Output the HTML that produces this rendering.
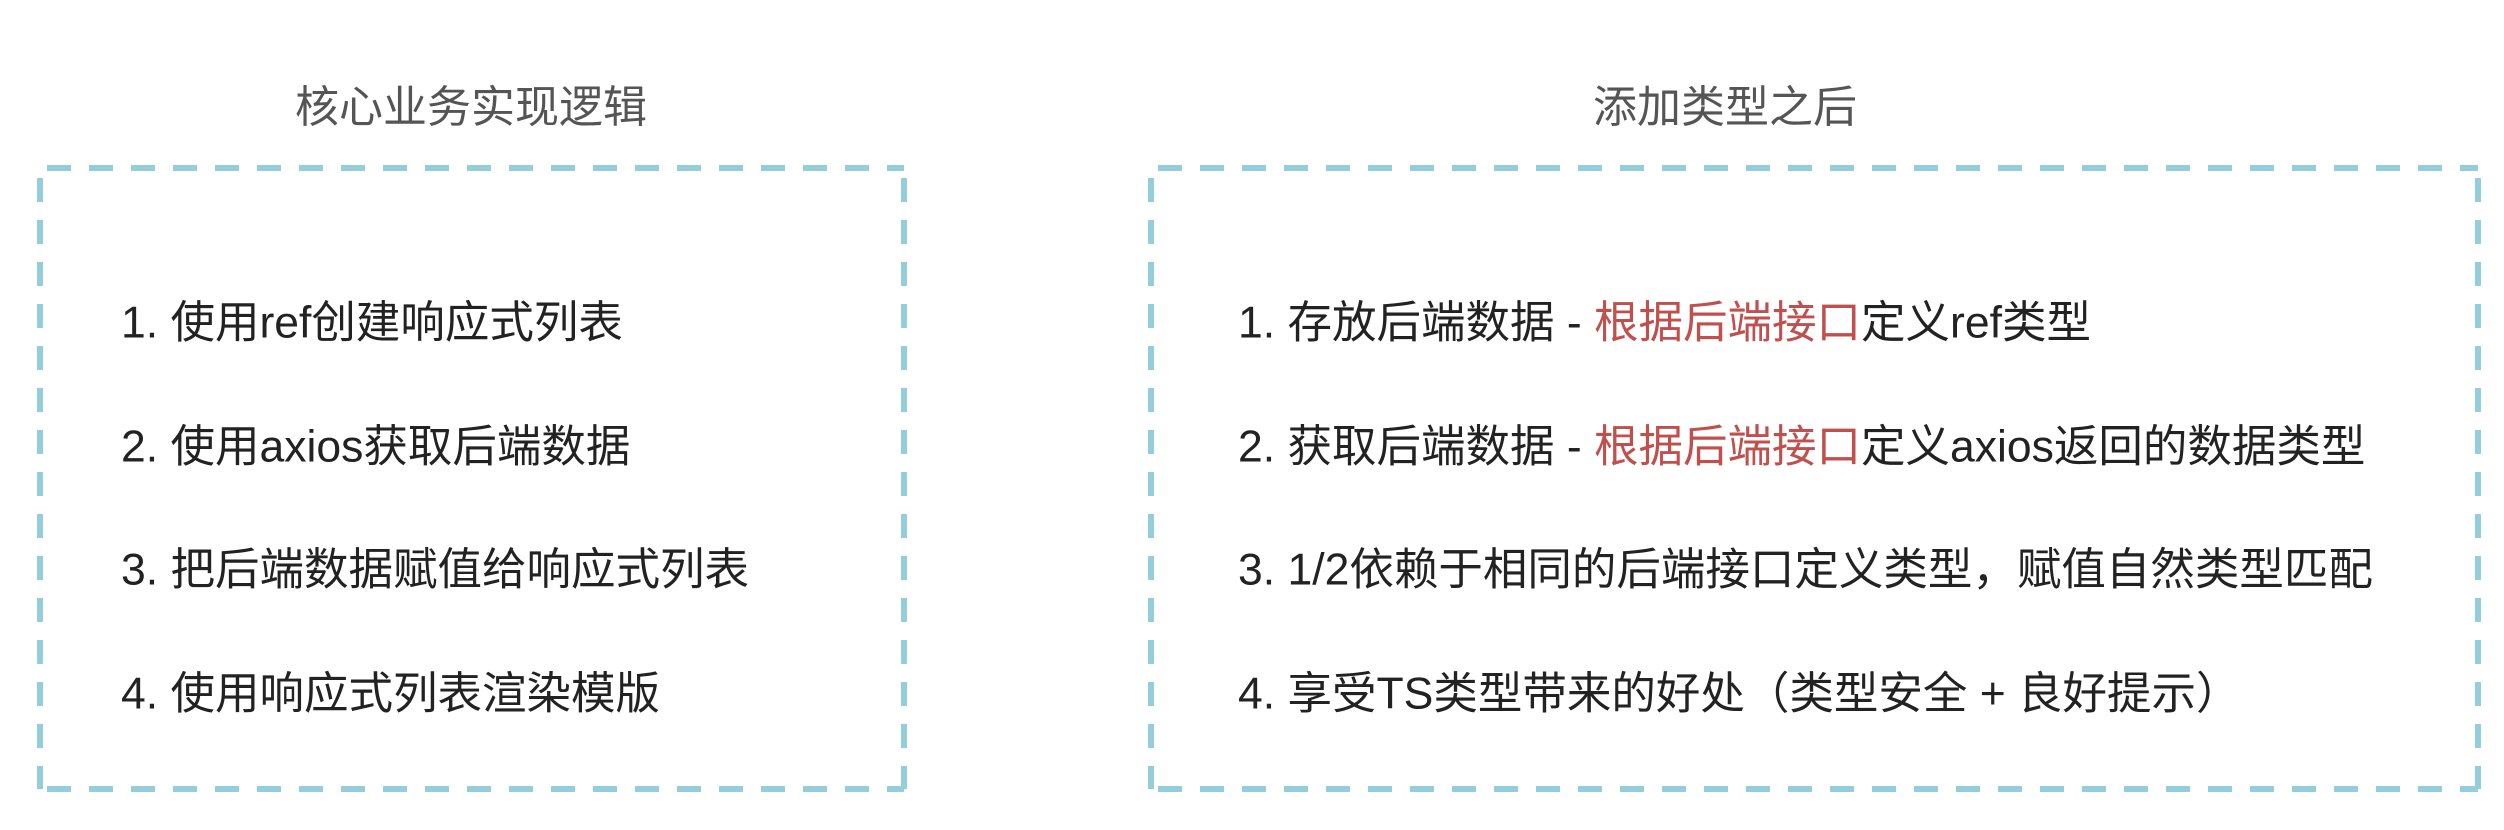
<!DOCTYPE html>
<html><head><meta charset="utf-8"><style>
html,body{margin:0;padding:0;background:#fff;}
body{width:2504px;height:830px;position:relative;overflow:hidden;font-family:"Liberation Sans","Noto Sans CJK SC",sans-serif;}
.t{position:absolute;font-size:44px;color:#555;white-space:nowrap;transform:translate(-50%,-50%);}
.l{position:absolute;font-size:44.5px;color:#222;white-space:nowrap;transform:translateY(-50%);}
.r{color:#c0504d;}
svg{position:absolute;left:0;top:0;}
</style></head><body>
<svg width="2504" height="830">
<g stroke="#94cddc" stroke-width="6" stroke-dasharray="24 18" fill="none">
<line x1="47" y1="168" x2="904" y2="168"/>
<line x1="47" y1="789" x2="904" y2="789"/>
<line x1="40" y1="178" x2="40" y2="789"/>
<line x1="904" y1="178" x2="904" y2="789"/>
<line x1="1158" y1="168" x2="2478" y2="168"/>
<line x1="1158" y1="789" x2="2478" y2="789"/>
<line x1="1151" y1="178" x2="1151" y2="789"/>
<line x1="2478" y1="178" x2="2478" y2="789"/>
</g>
</svg>
<div class="t" style="left:471px;top:103px">核心业务实现逻辑</div>
<div class="t" style="left:1725px;top:103px">添加类型之后</div>
<div class="l" style="left:121px;top:318px">1. 使用ref创建响应式列表</div>
<div class="l" style="left:121px;top:442px">2. 使用axios获取后端数据</div>
<div class="l" style="left:121px;top:565px">3. 把后端数据赋值给响应式列表</div>
<div class="l" style="left:121px;top:689px">4. 使用响应式列表渲染模版</div>
<div class="l" style="left:1238px;top:318px">1. 存放后端数据 - <span class="r">根据后端接口</span>定义ref类型</div>
<div class="l" style="left:1238px;top:442px">2. 获取后端数据 - <span class="r">根据后端接口</span>定义axios返回的数据类型</div>
<div class="l" style="left:1238px;top:565px">3. 1/2依赖于相同的后端接口定义类型，赋值自然类型匹配</div>
<div class="l" style="left:1238px;top:689px">4. 享受TS类型带来的好处（类型安全 + 良好提示）</div>
</body></html>
